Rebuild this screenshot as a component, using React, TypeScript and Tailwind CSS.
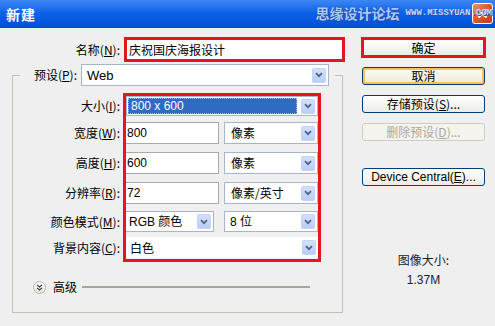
import React from "react";

const FONT = { fontFamily: '"Liberation Sans", Tahoma, "Noto Sans CJK SC", sans-serif' };
const CJK = { fontFamily: '"Noto Sans CJK SC", sans-serif' };

function Arrow() {
  return (
    <div className="w-[14px] h-[15px] mr-[2px] flex items-center justify-center rounded-[2px] bg-gradient-to-b from-[#d4e0fb] to-[#b9cdf6] border border-[#c3d3f5] shrink-0">
      <svg width="8" height="6" viewBox="0 0 8 6">
        <path d="M1 1.2 L4 4.2 L7 1.2" fill="none" stroke="#4d6185" strokeWidth="1.7" />
      </svg>
    </div>
  );
}

function Row({ children, className }: { children: React.ReactNode; className: string }) {
  return <div className={className}>{children}</div>;
}

export default function App() {
  return (
    <div
      className="w-[495px] h-[326px] bg-[#efefef] overflow-hidden text-[12px] text-black leading-none"
      style={FONT}
    >
      {/* Title bar */}
      <div className="relative h-[28px] flex items-center bg-gradient-to-b from-[#3b87f5] via-[#0b5fe8] to-[#0550d6] border-b border-[#0a46b8]">
        <span className="ml-[6px] text-white font-bold text-[14px] tracking-[1px] shrink-0" style={CJK}>
          新建
        </span>
        <div className="flex-1" />
        <div className="w-[21px] h-[21px] mr-[2px] shrink-0 rounded-[3px] border border-white bg-gradient-to-br from-[#f0906a] via-[#e0552c] to-[#c43a16] flex items-center justify-center">
          <svg width="11" height="11" viewBox="0 0 11 11">
            <path d="M1.5 1.5 L9.5 9.5 M9.5 1.5 L1.5 9.5" stroke="white" strokeWidth="2.2" />
          </svg>
        </div>
        {/* watermark overlaid on the title bar and close button */}
        <div className="absolute z-20 right-[3px] top-[6px] flex items-center whitespace-nowrap">
          <span
            className="text-[#a9cbff] text-[14px] font-bold mr-[6px]"
            style={{ ...CJK, textShadow: "0 0 1px #1c3f9a, 1px 1px 0 #2a4fa8" }}
          >
            思缘设计论坛
          </span>
          <span
            className="text-[#c0d8ff] text-[9px] font-bold"
            style={{ fontFamily: '"Liberation Mono", monospace', textShadow: "1px 1px 0 #2a4fa8" }}
          >
            WWW.MISSYUAN.COM
          </span>
        </div>
      </div>

      <div className="flex">
        {/* Left column */}
        <div className="w-[350px]">
          {/* Name row */}
          <div className="flex items-center mt-[9px] h-[25px]">
            <div className="w-[124px] pr-[4px] text-right" style={CJK}>
              名称(<u>N</u>):
            </div>
            <div className="w-[221px] h-[25px] border-[3px] border-[#df1a1f] bg-white flex items-center pl-[2px]" style={CJK}>
              庆祝国庆海报设计
            </div>
          </div>

          {/* Group box */}
          <div className="mt-[13px] ml-[12px] w-[331px] h-[238px] border border-[#c2c1b8]">
            {/* Preset row (legend) */}
            <div className="-mt-[12px] ml-[7px] w-[315px] h-[22px] bg-[#efefef] flex items-center">
              <div className="w-[61px] pr-[4px] text-right" style={CJK}>
                预设(<u>P</u>):
              </div>
              <div className="w-[248px] h-[22px] bg-white border border-[#a5b6cc] flex items-center">
                <span className="flex-1 pl-[5px] text-[13px]">Web</span>
                <Arrow />
              </div>
            </div>

            {/* Fields */}
            <div className="flex mt-[7px]">
              <div className="w-[110px] pt-[3px] pr-[3px] flex flex-col items-end" style={CJK}>
                <Row className="h-[20px] flex items-center">大小(<u>I</u>):</Row>
                <Row className="h-[22px] mt-[6px] flex items-center">宽度(<u>W</u>):</Row>
                <Row className="h-[22px] mt-[8px] flex items-center">高度(<u>H</u>):</Row>
                <Row className="h-[22px] mt-[8px] flex items-center">分辨率(<u>R</u>):</Row>
                <Row className="h-[21px] mt-[7px] flex items-center">颜色模式(<u>M</u>):</Row>
                <Row className="h-[21px] mt-[5px] flex items-center">背景内容(<u>C</u>):</Row>
              </div>

              <div className="w-[198px] h-[169px] border-[3px] border-[#df1a1f] flex flex-col" style={FONT}>
                {/* size */}
                <div className="h-[20px] bg-white border border-[#a5b6cc] flex items-center">
                  <div className="flex-1 h-[16px] ml-[1px] mr-[4px] bg-[#316ac5] border border-dotted border-[#9fb6e0] text-white flex items-center pl-[2px] text-[12px]">
                    800 x 600
                  </div>
                  <Arrow />
                </div>
                {/* width */}
                <div className="flex mt-[6px] h-[22px] gap-[5px]">
                  <div className="w-[93px] bg-white border border-[#a9a9a9] border-l-0 flex items-center pl-[1px]">800</div>
                  <div className="w-[94px] bg-white border border-[#a5b6cc] flex items-center">
                    <span className="flex-1 pl-[6px]" style={CJK}>像素</span>
                    <Arrow />
                  </div>
                </div>
                {/* height */}
                <div className="flex mt-[8px] h-[22px] gap-[5px]">
                  <div className="w-[93px] bg-white border border-[#a9a9a9] border-l-0 flex items-center pl-[1px]">600</div>
                  <div className="w-[94px] bg-white border border-[#a5b6cc] flex items-center">
                    <span className="flex-1 pl-[6px]" style={CJK}>像素</span>
                    <Arrow />
                  </div>
                </div>
                {/* resolution */}
                <div className="flex mt-[8px] h-[22px] gap-[5px]">
                  <div className="w-[93px] bg-white border border-[#a9a9a9] border-l-0 flex items-center pl-[1px]">72</div>
                  <div className="w-[94px] bg-white border border-[#a5b6cc] flex items-center">
                    <span className="flex-1 pl-[6px]" style={CJK}>像素/英寸</span>
                    <Arrow />
                  </div>
                </div>
                {/* color mode */}
                <div className="flex mt-[7px] h-[21px] gap-[10px]">
                  <div className="w-[88px] bg-white border border-[#a5b6cc] border-l-0 flex items-center">
                    <span className="flex-1 pl-[3px]">RGB <span style={CJK}>颜色</span></span>
                    <Arrow />
                  </div>
                  <div className="w-[94px] bg-white border border-[#a5b6cc] flex items-center">
                    <span className="flex-1 pl-[5px]">8 <span style={CJK}>位</span></span>
                    <Arrow />
                  </div>
                </div>
                {/* background */}
                <div className="mt-[5px] h-[21px] bg-white flex items-center">
                  <span className="flex-1 pl-[4px]" style={CJK}>白色</span>
                  <Arrow />
                </div>
              </div>
            </div>

            {/* Advanced */}
            <div className="ml-[20px] mt-[18px] h-[14px] w-[290px] flex items-center gap-[5px]">
              <div className="w-[13px] h-[13px] shrink-0 rounded-full border border-[#b8b8b0] bg-gradient-to-b from-white to-[#e3e3dc] flex items-center justify-center mr-[2px]">
                <svg width="7" height="7" viewBox="0 0 7 7">
                  <path d="M1 0.8 L3.5 3 L6 0.8 M1 3.8 L3.5 6 L6 3.8" fill="none" stroke="#333" strokeWidth="1.1" />
                </svg>
              </div>
              <span className="shrink-0" style={CJK}>高级</span>
              <div className="w-[228px] h-[2px] shrink-0 bg-[#a5a5a0]" />
            </div>
          </div>
        </div>

        {/* Right column */}
        <div className="ml-[11px] w-[125px] flex flex-col items-center" style={CJK}>
          <div className="mt-[9px] w-[125px] h-[21px] border-[3px] border-[#df1a1f] bg-gradient-to-b from-white to-[#ecebe6] flex items-center justify-center">
            确定
          </div>
          <div className="mt-[9px] w-[123px] h-[18px] rounded-[3px] border border-[#003c74] bg-gradient-to-b from-[#fffdf5] to-[#ece9d8] flex items-center justify-center shadow-[inset_0_0_0_2px_#f7c35a]">
            取消
          </div>
          <div className="mt-[10px] w-[123px] h-[18px] rounded-[3px] border border-[#003c74] bg-gradient-to-b from-white to-[#ecebe5] flex items-center justify-center">
            存储预设(<u>S</u>)...
          </div>
          <div className="mt-[10px] w-[123px] h-[18px] rounded-[3px] border border-[#cfcdc3] bg-[#f4f3ee] text-[#aca899] flex items-center justify-center">
            删除预设(<u>D</u>)...
          </div>
          <div className="mt-[27px] w-[123px] h-[18px] rounded-[3px] border border-[#003c74] bg-gradient-to-b from-white to-[#ecebe5] flex items-center justify-center" style={FONT}>
            Device Central(<u>E</u>)...
          </div>
          <div className="mt-[66px] h-[16px] flex items-center text-[#222]">图像大小:</div>
          <div className="mt-[4px] h-[16px] flex items-center text-[#222]" style={FONT}>1.37M</div>
        </div>
      </div>
    </div>
  );
}
